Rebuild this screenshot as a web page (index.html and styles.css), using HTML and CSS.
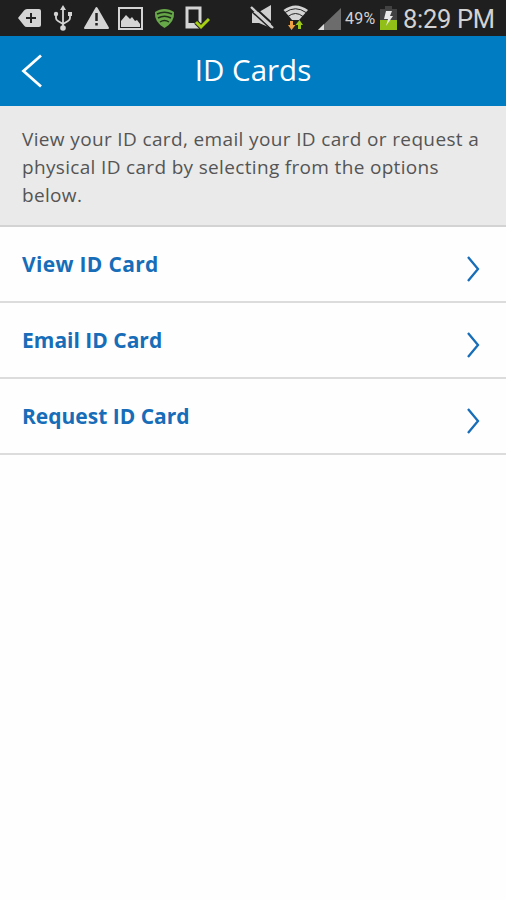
FILE: index.html
```html
<!DOCTYPE html>
<html lang="en">
<head>
<meta charset="utf-8">
<title>ID Cards</title>
<link rel="stylesheet" href="styles.css">
</head>
<body>
<div class="status">
  <svg class="notifications" width="192" height="36" viewBox="18 0 192 36">
    <path fill="#d4d4d4" d="M18 18 24 10.500Q25 9 27 9H39Q41 9 41 11V25Q41 27 39 27H27Q25 27 24 25.500Z"/>
    <path stroke="#222" stroke-width="2" d="M26 18H36M31 13V23"/>
    <g stroke="#d4d4d4" stroke-width="1.800" fill="none"><path d="M63 9V28M56 14V18Q56 20 58 21L63 24M70 14V18Q70 20 68 21L63 24"/></g>
    <g fill="#d4d4d4"><path d="M63 5 66 10H60ZM68 12H72V16H68Z"/><circle cx="56" cy="14" r="2.200"/><circle cx="63" cy="28" r="2.800"/></g>
    <path fill="#d4d4d4" stroke="#d4d4d4" stroke-width="2" stroke-linejoin="round" d="M96.500 8 108 28H85Z"/>
    <path stroke="#222" stroke-width="2.500" d="M96.500 13V21M96.500 23V25.500"/>
    <rect x="119" y="8" width="23" height="21" fill="none" stroke="#d4d4d4" stroke-width="2"/>
    <path fill="#d4d4d4" d="M121 27V21L126 15 130 19 132 17 135 21 137 20 140 24V27Z"/>
    <path fill="#67a849" d="M164.500 9C168 9 171 10 174 12Q175 22 164.500 28Q154 22 155 12C158 10 161 9 164.500 9Z"/>
    <path fill="none" stroke="#1f311a" stroke-width="1.500" d="M157 14Q164.500 10.500 172 14M158 18Q164.500 14.500 171 18M160 22Q164.500 19 169 22"/>
    <rect x="187" y="8" width="13" height="19" fill="none" stroke="#d4d4d4" stroke-width="3"/>
    <path stroke="#d4d4d4" stroke-width="5" d="M187 25.500H199"/>
    <path fill="none" stroke="#222" stroke-width="5" d="M196 22 201 27 209 19"/>
    <path fill="none" stroke="#a8d014" stroke-width="3" d="M196 22 201 27 209 19"/>
  </svg>
  <div class="system">
    <svg width="92" height="36" viewBox="250 0 92 36">
      <path fill="#d0d0d0" d="M252 12H259L271 5V28L259 23H252Z"/>
      <path stroke="#202020" stroke-width="2" d="M252 5 275 26"/>
      <path stroke="#202020" stroke-width="1.500" d="M249 9 272 30"/>
      <path stroke="#d0d0d0" stroke-width="2.400" d="M251 7 273 28"/>
      <path fill="#d4d4d4" d="M283.500 10Q295.500 1 308 10L295.500 24Z"/>
      <path fill="none" stroke="#222" stroke-width="1" d="M285 12.500Q295.500 5 306 12.500M288 16.500Q295.500 10.500 303 16.500"/>
      <path stroke="#202020" stroke-width="12" d="M295.500 20V30"/>
      <path fill="#f0a044" d="M290 21H293V25H295.500L291.500 30 288 25H290Z"/>
      <path fill="#9bc719" d="M298 29V25H295.500L299.500 20 303 25H301V29Z"/>
      <path fill="#6c6c6c" d="M318 30 341 8V30Z"/><path fill="#ddd" d="M318 30 324 24V30Z"/>
    </svg>
    <span class="percent">49%</span>
    <svg width="18" height="36" viewBox="378 0 18 36">
      <path fill="#424242" d="M384 6H391V9H396V20H379V9H384Z"/><path fill="#91bf18" d="M379 20H396V30H379Z"/>
      <path fill="#e8e8e8" d="M385 11H391L389 16H392L385 26 387 19H383Z"/>
    </svg>
    <span class="clock">8:29 PM</span>
  </div>
</div>
<header class="header">
  <svg class="back" width="22" height="36" viewBox="0 0 22 36"><path d="M20 2.500 2.500 18 20 33.500"/></svg>
  <h1>ID Cards</h1>
</header>
<p class="intro"><span class="opening">View your ID card, email your ID card or request a</span><br>physical ID card by selecting from the options<br>below.</p>
<nav>
  <a class="row"><span class="view">View ID Card</span><svg width="14" height="28" viewBox="0 0 14 28"><path d="M2 2 12 14 2 26"/></svg></a>
  <a class="row"><span>Email ID Card</span><svg width="14" height="28" viewBox="0 0 14 28"><path d="M2 2 12 14 2 26"/></svg></a>
  <a class="row"><span>Request ID Card</span><svg width="14" height="28" viewBox="0 0 14 28"><path d="M2 2 12 14 2 26"/></svg></a>
</nav>
</body>
</html>
```
FILE: styles.css
```css
* { box-sizing: border-box; }
body { margin: 0; background: #fefefe; font-family: "Open Sans", sans-serif; }
.status { height: 36px; background: #1f1f1f; display: flex; justify-content: space-between; padding: 0 11px 0 18px; }
.status svg { display: block; flex: none; }
.system { display: flex; color: #d2d2d2; font-family: Roboto, sans-serif; white-space: nowrap; }
.percent { width: 33px; margin: 0 1px 0 3px; font-size: 16px; line-height: 38px; letter-spacing: 0.2px; }
.clock { width: 92px; margin-left: 6px; font-size: 25.500px; line-height: 39px; letter-spacing: -0.3px; }
.header { height: 70px; background: #007cc3; display: grid; grid-template-columns: 44px 1fr 44px; align-items: center; }
.back { margin-left: 21px; fill: none; stroke: #fff; stroke-width: 2.800; }
h1 { margin: 0; padding-bottom: 2px; color: #fff; font-size: 29.500px; font-weight: 500; line-height: 66px; text-align: center; }
.intro { margin: 0; height: 121px; padding: 19px 22px 0; border-bottom: 2px solid #d3d3d3; background: #eaeaea; color: #555; font-size: 19px; line-height: 28px; letter-spacing: 0.33px; white-space: nowrap; }
.opening { letter-spacing: 0.36px; }
.row { height: 76px; padding: 0 26px 0 22px; border-bottom: 2px solid #dcdcdc; display: flex; align-items: center; justify-content: space-between; color: #176db8; font-size: 21px; font-weight: 700; line-height: 74px; }
.view { letter-spacing: 0.33px; }
.row svg { margin-top: 10px; fill: none; stroke: #176db8; stroke-width: 2.300; }
```
